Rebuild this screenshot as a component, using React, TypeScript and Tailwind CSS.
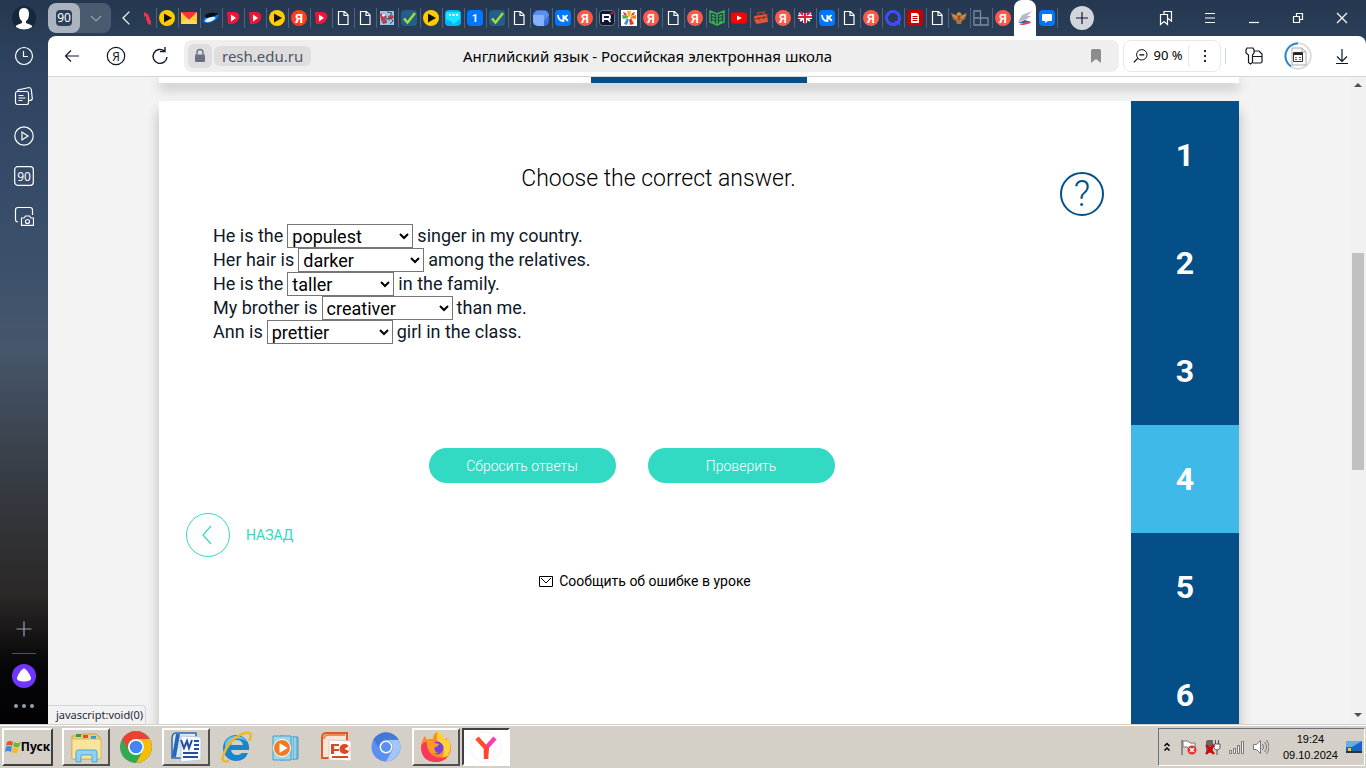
import { useState } from 'react';
import type { ReactNode } from 'react';
import { clsx } from 'clsx';

type TabKind =
  | 'cut' | 'play' | 'mail' | 'planet' | 'd' | 'ya' | 'yaSoft' | 'doc' | 'cartoon' | 'check'
  | 'chat' | 'one' | 'cube' | 'vk' | 'rutube' | 'flower' | 'book' | 'youtube' | 'case'
  | 'heart' | 'ring' | 'list' | 'eagle' | 'blocks';

const tabs: TabKind[] = [
  'play', 'mail', 'planet', 'd', 'd', 'play', 'ya', 'd', 'doc', 'doc',
  'cartoon', 'check', 'play', 'chat', 'one', 'check', 'doc', 'cube', 'vk', 'yaSoft',
  'rutube', 'flower', 'yaSoft', 'doc', 'yaSoft', 'book', 'youtube', 'case', 'yaSoft', 'heart',
  'vk', 'doc', 'yaSoft', 'ring', 'list', 'doc', 'eagle', 'blocks', 'yaSoft',
];

const shapes: Record<TabKind, ReactNode> = {
  cut: <path d="M8 2l4 2 3 8v3l-3-1-2-5v-3l-2 1z" fill="#f0304e" />,
  play: (
    <>
      <circle cx="8" cy="8" r="8" fill="#ffcc00" />
      <path d="M5 3.5v9L13 8z" fill="#111" />
    </>
  ),
  mail: (
    <>
      <path d="M0 2h16v12H0z" fill="#ffcc33" />
      <path d="M0 2h16l-8 8z" fill="#f8333c" />
      <path d="M0 14l6-6 2 2 2-2 6 6z" fill="#ffdb5c" />
    </>
  ),
  planet: (
    <>
      <path d="M0 11C1 5 8 2 16 4c0 4-5 8-11 9-4 0-5-1-5-2z" fill="#0870e8" />
      <path d="M2 6c3-4 9-4 14-2L9 7 3 8z" fill="#080b12" />
      <ellipse cx="7" cy="9.500" rx="5.500" ry="2.200" fill="#d8f2ff" transform="rotate(-20 7 9)" />
    </>
  ),
  d: (
    <>
      <path d="M2 2h6c5 0 7 2 6 6s-4 6-8 6H3z" fill="#ef1536" />
      <path d="M6 4.500l5 3.500-5 3.500z" fill="#fff" />
    </>
  ),
  ya: (
    <>
      <circle cx="8" cy="8" r="8" fill="#fc3f1d" />
      <text x="8" y="12.5" textAnchor="middle" fontSize="13" fontWeight="700" fill="#fff">Я</text>
    </>
  ),
  yaSoft: (
    <>
      <circle cx="8" cy="8" r="8" fill="#fa5b49" />
      <text x="8" y="12.5" textAnchor="middle" fontSize="13" fontWeight="600" fill="#fff">Я</text>
    </>
  ),
  doc: <path d="M3.500 1.500h6l3.500 3.500v9.500H3.500zM9 1.500V5.500h4" fill="none" stroke="#fff" strokeWidth="1.200" />,
  cartoon: (
    <>
      <path d="M1 1h14v14H1z" fill="#9bc9e4" />
      <path d="M1 4l4-1 2 3-1 4 2 3-4 1-2-4zM9 6l5-1 1 3-4 1-1 3z" fill="#c73b48" />
      <circle cx="4.500" cy="5" r="1.500" fill="#fff" />
      <path d="M8 2l5 1-2 3M8 9l4-1 2 3-3 3M7 6v7" stroke="#344767" fill="none" />
    </>
  ),
  check: (
    <>
      <rect width="16" height="16" rx="4" fill="#235f86" />
      <path d="M3 8.5l3.500 4L14 3" fill="none" stroke="#a5dc3c" strokeWidth="2.4" />
    </>
  ),
  chat: (
    <>
      <rect width="16" height="16" rx="4" fill="#00b7ff" />
      <path d="M1 2h14v7l-4 3-3 3-1-3-6-3z" fill="#18e8ff" />
      <path d="M4 5h2M7.500 5h2M11 5h2" stroke="#fff" strokeWidth="2" />
    </>
  ),
  one: (
    <>
      <rect width="16" height="16" rx="4" fill="#0077ff" />
      <text x="8" y="12" textAnchor="middle" fontSize="11" fontWeight="700" fill="#fff">1</text>
    </>
  ),
  cube: (
    <>
      <rect width="16" height="16" rx="5" fill="#3a6fd8" />
      <path d="M0 5h11v11H5a5 5 0 01-5-5z" fill="#85b2ff" />
      <path d="M0 5l4-4h9l3 4-5 6V5z" fill="#5a90f0" />
    </>
  ),
  vk: (
    <>
      <rect width="16" height="16" rx="4" fill="#0077ff" />
      <path d="M3 5c.2 4 2.200 6 5.400 6V5M8.400 8c2-.3 3-1.300 3.900-3M9 8c2 .3 3 1.500 3.800 3" fill="none" stroke="#fff" strokeWidth="1.8" />
    </>
  ),
  rutube: (
    <>
      <rect x=".5" y=".5" width="15" height="15" rx="3" fill="#0e1733" stroke="#68758a" />
      <path d="M4 12V5h5.500q1.500 0 1.500 2t-1.500 2H5M9 9l2.500 3" fill="none" stroke="#fff" strokeWidth="1.8" />
      <circle cx="12.800" cy="3.200" r="1.200" fill="#ed143b" />
    </>
  ),
  flower: (
    <>
      <path d="M0 0h16v16H0z" fill="#fff" />
      <path d="M6 1h4l-1 6H7z" fill="#ffb400" />
      <path d="M15 5v4l-6-1V7z" fill="#ff7a00" />
      <path d="M13 14l-4 1-1-6 2-1z" fill="#e2352b" />
      <path d="M3 14l3 1 2-6-2-1z" fill="#3e8ede" />
      <path d="M1 5l1 4 5-1V6z" fill="#54b435" />
      <path d="M2 2l3 1 1 3-3-1z" fill="#e23b60" />
      <path d="M14 2l-3 1-1 3 3-1z" fill="#f04030" />
      <circle cx="8" cy="8" r="1.500" fill="#fff" />
    </>
  ),
  book: (
    <path d="M8 4v11l-7-3V1l7 3 7-3v11l-7 3M3 5l3 1.500M3 8l3 1.500M10 6.500L13 5M10 9.500L13 8M3 11l3 1.500M13 11l-3 1.500" fill="none" stroke="#35b44a" strokeWidth="1.500" />
  ),
  youtube: (
    <>
      <rect y="2.500" width="16" height="11" rx="3" fill="#f00" />
      <path d="M6 5.500v5L11 8z" fill="#fff" />
    </>
  ),
  case: (
    <>
      <path d="M5 5V3l6-1v3" fill="none" stroke="#b83b22" strokeWidth="1.500" />
      <path d="M1 6l13-2 1 8-11 2-2-2z" fill="#de573a" />
      <path d="M2 9l12-2M6 7v3M11 6v3" stroke="#8b2b20" />
    </>
  ),
  heart: (
    <>
      <path d="M8 15L1 8C-1 3 4-1 8 3c4-4 9 0 7 5z" fill="#263d9e" />
      <path d="M2 3l11 8M14 3L3 11" stroke="#fff" strokeWidth="2" />
      <path d="M8 3v10M1 7h14" stroke="#fff" strokeWidth="4" />
      <path d="M8 3v11M1 7h14M3 2l3 3M13 2l-3 3" stroke="#e02031" strokeWidth="2" />
    </>
  ),
  ring: (
    <>
      <circle cx="8" cy="8" r="6.500" fill="none" stroke="#414cff" strokeWidth="3" />
      <path d="M9 11h6v5z" fill="#414cff" />
    </>
  ),
  list: (
    <>
      <rect width="16" height="16" rx="3" fill="#c80000" />
      <path d="M4 3h6l2 2v8H4z" fill="#fff" />
      <path d="M5.500 6.500h5M5.500 8.500h5M5.500 10.500h5" stroke="#c80000" />
    </>
  ),
  eagle: (
    <>
      <path d="M0 3l5 2 2-3h2l2 3 5-2-2 6-3 2-1 3H6l-1-3-3-2z" fill="#a8743c" />
      <path d="M2 5l4 3M14 5l-4 3M6 4h4" stroke="#e8b468" />
      <path d="M7 6h2v4H7z" fill="#c63232" />
    </>
  ),
  blocks: (
    <path d="M1 1h6.500v7H1zM1 8h6.500v7H1zM7.500 8H15v7H7.500z" fill="none" stroke="#7d8b9f" strokeWidth="1.300" />
  ),
};

function Favicon({ kind }: { kind: TabKind }) {
  return (
    <svg viewBox="0 0 16 16" className="size-4 shrink-0 font-['Roboto',sans-serif]" aria-hidden="true">
      {shapes[kind]}
    </svg>
  );
}

function Stroke({ children, className = 'size-5' }: { children: ReactNode; className?: string }) {
  return (
    <svg viewBox="0 0 20 20" fill="none" stroke="currentColor" strokeWidth="1.2" className={className} aria-hidden="true">
      {children}
    </svg>
  );
}

function Sidebar() {
  const icons = [
    { label: 'History', icon: <><circle cx="10" cy="10" r="8.500" /><path d="M9.500 5v5.500H14" /></> },
    { label: 'Collections', icon: <><rect x="1.500" y="5.500" width="13" height="13" rx="2" /><path d="M4 5V4l11-2.500q2 0 2.300 2l1 9q0 2-3.300 2M4.500 9.500h5M4.500 12h7M4.500 14.500h4" /></> },
    { label: 'Video', icon: <><circle cx="10" cy="10" r="9.200" /><path d="M8 6v8l6-4z" /></> },
    { label: 'Tabs', icon: <><rect x=".7" y=".7" width="18.600" height="18.600" rx="3" /><text x="10" y="14.500" textAnchor="middle" fontSize="12" fill="currentColor" stroke="none">90</text></> },
    { label: 'Screenshot', icon: <><path d="M4 16q-2.500 0-2.500-2.500V4Q1.500 1.500 4 1.500h12q2.500 0 2.500 2.500v5" /><path d="M8 12h2l1.500-2h4l1.500 2h2.500v7.300H7.500V12z" /><circle cx="13.500" cy="15.500" r="2" /></> },
  ];

  return (
    <aside className="flex w-12 shrink-0 flex-col items-center text-white">
      <button aria-label="Profile" className="flex h-9 items-center">
        <svg viewBox="0 0 24 24" className="size-6">
          <circle cx="12" cy="12" r="12" fill="#17283a" />
          <path d="M12 2c4 0 5 3 5 6s-1 6-3 7v2l5 2c1 .500 1 1 1 2q-8 5-16 0c0-1 0-1.500 1-2l5-2v-2c-2-1-3-4-3-7s1-6 5-6z" fill="#fff" />
        </svg>
      </button>
      {icons.map((item) => (
        <button key={item.label} aria-label={item.label} className="flex h-10 items-center">
          <Stroke>{item.icon}</Stroke>
        </button>
      ))}
      <div className="mt-auto flex flex-col items-center pb-3.5">
        <button aria-label="Add" className="text-gray-400">
          <Stroke><path d="M10 2.500v15M2.500 10h15" /></Stroke>
        </button>
        <div className="mt-3.5 mb-2.5 h-px w-6 bg-gray-600" />
        <button aria-label="Alice">
          <svg viewBox="0 0 24 24" className="size-6">
            <circle cx="12" cy="12" r="12" fill="#7036ff" />
            <path d="M12 4.500c2 0 7 7 7 10 0 2-3 3-7 3s-7-1-7-3c0-3 5-10 7-10z" fill="#fff" />
          </svg>
        </button>
        <button aria-label="More" className="mt-4 flex gap-1 pb-0.5">
          <span className="size-1 rounded-full bg-gray-400" />
          <span className="size-1 rounded-full bg-gray-400" />
          <span className="size-1 rounded-full bg-gray-400" />
        </button>
      </div>
    </aside>
  );
}

function TabStrip() {
  const controls = [
    { label: 'Bookmarks', icon: <path d="M4.500 6.500h7v10L8 13.500l-3.500 3zM8 6V3.500h7.500v9.500L12 10.500" /> },
    { label: 'Menu', icon: <path d="M5 5.500h10M5 10h10M5 14.500h10" /> },
    { label: 'Minimize', icon: <path d="M5 14.500h10" /> },
    { label: 'Restore', icon: <path d="M5.500 8.500h6v6h-6zM8.500 8V5.500h6v6H12" /> },
    { label: 'Close', icon: <path d="M5 5l10 10M15 5L5 15" /> },
  ];

  return (
    <div className="flex h-9 items-center text-white">
      <div className="flex h-[30px] w-[63px] shrink-0 overflow-hidden rounded-lg bg-[#4a5b70]">
        <button className="flex w-8 items-center justify-center rounded-lg bg-[#abb3be]">
          <span className="flex size-4 items-center justify-center rounded-sm bg-[#2b405a] text-xs">90</span>
        </button>
        <button aria-label="Tab groups" className="flex flex-1 items-center justify-center text-gray-400">
          <Stroke><path d="M5 8l5 5 5-5" /></Stroke>
        </button>
      </div>
      <button aria-label="Scroll tabs" className="flex w-6 shrink-0 justify-end">
        <Stroke className="size-4"><path d="M13 2L5 10l8 8" strokeWidth="1.500" /></Stroke>
      </button>
      <div className="flex h-9 items-center">
        <div className="flex w-[21px] justify-center pr-1"><Favicon kind="cut" /></div>
        {tabs.map((kind, index) => (
          <button key={index} aria-label={`Tab ${index + 1}`} className="flex h-5 w-[22px] items-center justify-center border-l border-[#53627a] pr-px">
            <Favicon kind={kind} />
          </button>
        ))}
        <button aria-label="Active tab" className="flex h-9 w-[22px] items-center justify-center rounded-t-lg bg-white">
          <svg viewBox="0 0 16 16" className="size-4">
            <path d="M1 13l7-3 6 2-4 2z" fill="#2b65ba" />
            <path d="M2 15l10-4 2 2-7 2z" fill="#ed4452" />
            <path d="M1 12l4-7 10-4-5 5h4l-4 3-3 1z" fill="#b6bac1" />
          </svg>
        </button>
        <button aria-label="Messages" className="flex h-5 w-[22px] items-center justify-center border-r border-[#53627a]">
          <svg viewBox="0 0 16 16" className="size-4">
            <rect width="16" height="16" rx="4" fill="#0077ff" />
            <path d="M4 4h8q1 0 1 1v5q0 1-1 1H9l-3 2v-2H4q-1 0-1-1V5q0-1 1-1z" fill="#fff" />
          </svg>
        </button>
      </div>
      <button aria-label="New tab" className="ml-3 flex size-6 shrink-0 items-center justify-center rounded-full bg-[#d2d5dc] text-gray-900">
        <Stroke><path d="M10 4v12M4 10h12" /></Stroke>
      </button>
      <div className="ml-auto flex pr-0.5">
        {controls.map((item) => (
          <button key={item.label} aria-label={item.label} className="flex w-11 justify-center">
            <Stroke>{item.icon}</Stroke>
          </button>
        ))}
      </div>
    </div>
  );
}

function Toolbar() {
  return (
    <div className="flex h-[41px] shrink-0 items-center rounded-t-lg border-b border-gray-300 bg-white px-0.5 text-gray-900">
      <button aria-label="Back" className="flex w-11 justify-center">
        <Stroke><path d="M17 10H3.500M9 4.500L3.500 10 9 15.500" /></Stroke>
      </button>
      <button aria-label="Yandex" className="flex w-11 justify-center">
        <Stroke>
          <circle cx="10" cy="10" r="8.700" />
          <text x="10" y="14.500" textAnchor="middle" fontSize="12" fill="currentColor" stroke="none">Я</text>
        </Stroke>
      </button>
      <button aria-label="Reload" className="flex w-11 justify-center">
        <Stroke><path d="M14.500 5A7 7 0 1017 11M15 1v4.500h-5" strokeWidth="1.400" /></Stroke>
      </button>
      <div className="ml-0.5 grid h-8 flex-1 grid-cols-[1fr_auto_1fr] items-center rounded-lg bg-[#efefef] pr-3 pl-1">
        <div className="flex gap-0.5">
          <button aria-label="Site protection" className="flex size-6 items-center justify-center rounded-md bg-[#dedede] text-gray-500">
            <svg viewBox="0 0 16 16" className="size-4" fill="none" stroke="currentColor">
              <path d="M5 7V4.500a3 3 0 016 0V7" strokeWidth="1.400" />
              <rect x="3" y="6.500" width="10" height="7.500" rx="1" fill="currentColor" stroke="none" />
            </svg>
          </button>
          <button className="flex h-5 items-center self-center rounded-md bg-[#dedede] px-2 text-[15px] text-gray-600">resh.edu.ru</button>
        </div>
        <div className="text-[15px] text-black">Английский язык - Российская электронная школа</div>
        <button aria-label="Bookmark" className="justify-self-end px-1">
          <svg viewBox="0 0 14 16" className="h-4 w-3.5" fill="#8b8b8b"><path d="M2 3q0-2 2-2h6q2 0 2 2v12l-5-4-5 4z" /></svg>
        </button>
      </div>
      <div className="ml-1 flex h-8 w-[98px] items-center rounded-lg border border-gray-200">
        <button className="flex flex-1 items-center justify-center gap-1 pl-1 text-[13px] text-black">
          <Stroke className="size-4"><circle cx="11" cy="8.500" r="6.500" /><path d="M6 13l-5 5M8 8.500h6" strokeWidth="1.500" /></Stroke>
          90 %
        </button>
        <button aria-label="Options" className="flex h-5 w-8 items-center justify-center border-l border-gray-200">
          <svg viewBox="0 0 4 14" className="h-3.5 w-1" fill="#222"><path d="M1 1h2v2H1zM1 6h2v2H1zM1 11h2v2H1z" /></svg>
        </button>
      </div>
      <div className="ml-1 h-4 w-px bg-gray-300" />
      <div className="ml-1.5 flex items-center">
        <button aria-label="Passwords" className="flex w-11 justify-center">
          <Stroke><path d="M3 2h6l1 2v3L8.500 9v7.500L6.500 18l-2-1.500V9L2 7V4zM10 5h5l3 3v7.500q0 1.500-1.500 1.500H9M9 10.500h9" /></Stroke>
        </button>
        <button aria-label="Extension" className="flex w-11 items-center justify-center">
          <svg viewBox="0 0 28 28" className="size-7" fill="none">
            <circle cx="14" cy="14" r="12.800" stroke="#dedede" strokeWidth="2" />
            <path d="M7 24.500A12.800 12.800 0 0114 1.200" stroke="#2588d8" strokeWidth="2" />
            <path d="M8 6h10l4 4v13H8zM18 6v4h4" stroke="#aaa" />
            <path d="M9.500 10.500h9v9h-9z" stroke="#333" fill="#fff" />
            <path d="M9.500 11h9v2h-9z" fill="#222" />
            <path d="M11 15h2v1h-2zM15 17h2v1h-2z" fill="#d44" />
            <path d="M15 15h2v1h-2zM11 17h2v1h-2z" fill="#35d" />
          </svg>
        </button>
        <button aria-label="Downloads" className="flex w-11 justify-center">
          <Stroke><path d="M10 3v12M5 10.500l5 5 5-5M4 17.500h12" /></Stroke>
        </button>
      </div>
    </div>
  );
}

const questions = [
  { before: 'He is the', options: ['populest', 'popular', 'most popular'], after: 'singer in my country.', width: 'w-[126px]' },
  { before: 'Her hair is', options: ['darker', 'dark', 'the darkest'], after: 'among the relatives.', width: 'w-[126px]' },
  { before: 'He is the', options: ['taller', 'tall', 'tallest'], after: 'in the family.', width: 'w-[107px]' },
  { before: 'My brother is', options: ['creativer', 'creative', 'more creative'], after: 'than me.', width: 'w-[131px]' },
  { before: 'Ann is', options: ['prettier', 'pretty', 'the prettiest'], after: 'girl in the class.', width: 'w-[126px]' },
];

function Lesson() {
  const [answers, setAnswers] = useState(questions.map((q) => q.options[0]));

  return (
    <main className="flex min-w-0 flex-1 flex-col pr-[27px] pl-[54px]">
      <div className="grid pt-[60px]">
        <h1 className="col-start-1 row-start-1 text-center text-[23px] leading-9 font-light text-black">Choose the correct answer.</h1>
        <button aria-label="Help" className="col-start-1 row-start-1 mt-[11px] flex size-11 items-center justify-center justify-self-end rounded-full border-2 border-[#044f87] text-[#044f87]">
          <span className="text-4xl font-light">?</span>
        </button>
      </div>

      <div className="mt-2 text-lg leading-6 text-gray-900">
        {questions.map((q, index) => (
          <div key={index} className="flex h-6 items-center gap-1">
            <label htmlFor={`answer-${index}`}>{q.before}</label>
            <select
              id={`answer-${index}`}
              value={answers[index]}
              onChange={(e) => setAnswers((prev) => prev.map((a, i) => (i === index ? e.target.value : a)))}
              className={clsx('h-6 border border-[#767676] bg-white leading-[22px] text-black', q.width)}
            >
              {q.options.map((option) => (
                <option key={option}>{option}</option>
              ))}
            </select>
            <span>{q.after}</span>
          </div>
        ))}
      </div>

      {/* Actions */}
      <div className="-ml-[54px] mt-[104px] flex justify-center gap-8 text-sm font-light text-white">
        <button className="h-[35px] w-[187px] rounded-full bg-[#32d9c3]">Сбросить ответы</button>
        <button className="h-[35px] w-[187px] rounded-full bg-[#32d9c3]">Проверить</button>
      </div>
      <a href="#back" className="-ml-[27px] mt-[30px] flex items-center gap-4 self-start text-sm text-[#32d9c3]">
        <span className="flex size-11 items-center justify-center rounded-full border border-[#32d9c3]">
          <Stroke><path d="M13 1L5 10l8 9" /></Stroke>
        </span>
        НАЗАД
      </a>
      <a href="#report" className="-ml-[54px] -mr-[27px] mt-3.5 flex items-center justify-center gap-1.5 text-sm text-black">
        <svg viewBox="0 0 14 11" className="h-[11px] w-3.5" fill="none" stroke="currentColor"><path d="M.5.5h13v10H.5zM2 2l5 5 5-5" /></svg>
        Сообщить об ошибке в уроке
      </a>
    </main>
  );
}

function Page() {
  return (
    <div className="relative flex min-h-0 flex-1 bg-[#f3f3f3] font-['Roboto',sans-serif]">
      <div className="flex min-w-0 flex-1 flex-col overflow-hidden">
        <div className="mx-auto grid h-1.5 w-full max-w-[1080px] shrink-0 grid-cols-5 bg-white shadow-[0_5px_12px_rgba(0,0,0,0.28)]">
          <div className="col-start-3 bg-[#044f87]" />
        </div>
        <div className="mx-auto mt-[18px] flex w-full max-w-[1080px] flex-1 bg-white shadow-[0_10px_12px_rgba(0,0,0,0.25)]">
          <Lesson />
          <nav className="flex w-[108px] shrink-0 flex-col bg-[#044f87] text-[32px] font-bold text-white">
            {[1, 2, 3, 4, 5, 6].map((n) => (
              <a
                key={n}
                href={`#task-${n}`}
                className={clsx('flex h-[108px] shrink-0 items-center justify-center', n === 4 && 'bg-[#3fb9e8]')}
              >
                {n}
              </a>
            ))}
          </nav>
        </div>
      </div>

      {/* Scrollbar */}
      <div className="flex w-4 shrink-0 flex-col items-center bg-[#f1f1f1]">
        <svg viewBox="0 0 16 17" className="h-[17px] w-4" fill="#505050"><path d="M4 10l4-4 4 4z" /></svg>
        <div className="flex-[159]" />
        <div className="w-3 flex-[217] bg-[#c1c1c1]" />
        <div className="flex-[237]" />
        <svg viewBox="0 0 16 17" className="h-[17px] w-4" fill="#505050"><path d="M4 6l4 4 4-4z" /></svg>
      </div>

      <div className="absolute bottom-0 left-0 rounded-tr border-t border-r border-gray-300 bg-[#f2f2f2] px-2 pr-0.5 font-['Noto_Sans',sans-serif] text-[11px] leading-[18px] text-gray-800">
        javascript:void(0)
      </div>
    </div>
  );
}

const apps = [
  {
    label: 'Explorer',
    state: 'open',
    icon: (
      <>
        <path d="M2 5h8l2-2h14l4 3v22H2z" fill="#e9cf78" stroke="#c6a64c" />
        <path d="M6 3h5v3H6z" fill="#2ca43a" /><path d="M13 4h5v3h-5z" fill="#d95332" /><path d="M21 5h5v3h-5z" fill="#2999e8" />
        <path d="M2 8h29v20H2z" fill="#f8e49c" stroke="#d8b95c" />
        <path d="M6 31V21q0-2 2-2h17q2 0 2 2v10h-5v-7H11v7z" fill="#8fd3f3" stroke="#53a5d5" />
      </>
    ),
  },
  {
    label: 'Chrome',
    icon: (
      <>
        <circle cx="16" cy="16" r="16" fill="#34a853" />
        <path d="M2.200 8A16 16 0 0129.800 8H16a8 8 0 00-7 12z" fill="#ea4335" />
        <path d="M29.800 8A16 16 0 0116 32l7-12a8 8 0 00-7-12z" fill="#fbbc05" />
        <circle cx="16" cy="16" r="8" fill="#fff" /><circle cx="16" cy="16" r="6.300" fill="#4285f4" />
      </>
    ),
  },
  {
    label: 'Word',
    state: 'open',
    icon: (
      <>
        <path d="M6 2h20v25H2V8q0-6 4-6z" fill="#dce9f8" stroke="#2f66ae" strokeWidth="1.500" />
        <path d="M8 3L4 26" stroke="#2867b8" strokeWidth="4" />
        <path d="M11 5l20 1v23l-20 2z" fill="#f8fbff" stroke="#bcc8dc" />
        <path d="M11 9l3 8 3-7 2 7 3-8" fill="none" stroke="#254e9b" strokeWidth="2" />
        <path d="M24 10h5M24 14h5M24 18h5M13 22h15M13 26h15" stroke="#254e9b" strokeWidth="2" />
      </>
    ),
  },
  {
    label: 'Internet Explorer',
    icon: (
      <>
        <path d="M16 4a13 13 0 0113 15H11q1 5 6 5 3 0 5-2h6Q25 30 16 30A13 13 0 0116 4z" fill="#1685cf" />
        <path d="M11 14q1-5 6-5t6 5z" fill="#d4d0c8" />
        <path d="M5 12q3-7 11-7 7 0 11 6-5-4-11-3-7 1-11 9z" fill="#6ec4ee" />
        <path d="M9 30q-8 2-6-5Q8 9 22 3q8-3 9 1 0 3-2 6" fill="none" stroke="#efb827" strokeWidth="2.500" />
      </>
    ),
  },
  {
    label: 'Media Player',
    icon: (
      <>
        <path d="M10 5l18 1v22l-18 1z" fill="#72b9da" stroke="#4c98bc" /><path d="M22 5v24M25 6v22" stroke="#bce6f5" />
        <path d="M3 5h18v24H3z" fill="#9ed6ec" stroke="#4b9dc4" />
        <circle cx="12" cy="17" r="8.500" fill="#f27b20" stroke="#fff" /><path d="M9.500 12v10l8-5z" fill="#fff" />
      </>
    ),
  },
  {
    label: 'PowerPoint',
    icon: (
      <>
        <path d="M6 2h21v25H2V7q0-5 4-5z" fill="#fbe4d6" stroke="#d95a2c" strokeWidth="2" />
        <path d="M4 8q0-4 4-4h17" fill="none" stroke="#ee8659" strokeWidth="2" />
        <path d="M9 9l22 1v20l-22-1z" fill="#fff" stroke="#ddc9c0" />
        <path d="M11 13h8v2h-5v3h5v2h-5v3h-3z" fill="#d94a20" /><circle cx="24.500" cy="18" r="5" fill="#d94a20" />
        <path d="M24.500 18l4.500-3v5z" fill="#fff" /><path d="M12 26h16" stroke="#d94a20" strokeWidth="2" />
      </>
    ),
  },
  {
    label: 'Chromium',
    icon: (
      <>
        <circle cx="16" cy="16" r="14.500" fill="#5b8ff0" />
        <path d="M3.500 8.500A14.500 14.500 0 0128.500 8.500H16a7 7 0 00-6 10z" fill="#4378d8" />
        <path d="M28.500 9A14.500 14.500 0 0116 30.500l6-11a7 7 0 00-6-10.500z" fill="#a4c5fa" />
        <circle cx="16" cy="16" r="6.500" fill="#fff" /><circle cx="16" cy="16" r="5" fill="#5b91ee" />
      </>
    ),
  },
  {
    label: 'Firefox',
    state: 'open',
    icon: (
      <>
        <path d="M17 1q6 4 7 8l3-2q4 5 4 10a15 14 0 01-30 0Q1 10 5 5l2 4q3-2 6-1 0-5 4-7z" fill="#ff8a26" />
        <path d="M18 0q6 4 7 9l3-1q4 7 1 14-2 6-9 8 6-8 3-14l-6-7q-1-5 1-9z" fill="#ffd335" />
        <path d="M1 15q0 16 15 16 8 0 12-6-9 4-16-1-6-5-3-12-5-3-8 3z" fill="#f8385f" />
        <circle cx="17" cy="17" r="6.500" fill="#7542e5" />
        <path d="M7 10q6-2 8 2l4 1q-1 3-4 3-2 4 3 6-6 2-9-3-3-4-2-9z" fill="#ff9b22" />
      </>
    ),
  },
  {
    label: 'Yandex Browser',
    state: 'active',
    icon: (
      <>
        <circle cx="16" cy="16" r="15.500" fill="#fff" stroke="#f3f3f3" />
        <path d="M7 7l9 10v11" fill="none" stroke="#ff4c25" strokeWidth="4.500" />
        <path d="M25 7l-9 10" stroke="#ff3bb4" strokeWidth="4.500" />
        <path d="M14 17l3-3 2 3-1 11h-4z" fill="#ff4632" />
      </>
    ),
  },
];

function Taskbar() {
  return (
    <footer className="flex h-11 shrink-0 border-t border-[#d4d0c8] bg-[#d4d0c8] font-['Noto_Sans',sans-serif] text-black">
      <div className="flex flex-1 items-center border-t border-white pt-0.5 pr-px pb-0.5 pl-0.5">
        <button className="mr-[9px] flex h-[38px] w-[51px] items-center justify-center border-2 border-t-white border-r-[#404040] border-b-[#404040] border-l-white text-xs font-bold">
          <svg viewBox="0 0 16 16" className="size-4 shrink-0">
            <path d="M2 3q3-2 6 0L7 7Q4 5 1 7z" fill="#e5532c" /><path d="M9 3q3 2 7 0l-2 5q-3 1-6-1z" fill="#6fb63d" />
            <path d="M1 8q3-2 6 0l-1 5q-3-2-6 0z" fill="#3b8cdb" /><path d="M8 8q3 2 6 1l-2 5q-3 1-5-1z" fill="#f5bb25" />
          </svg>
          Пуск
        </button>
        <div className="flex gap-0.5">
          {apps.map((app) => (
            <button
              key={app.label}
              aria-label={app.label}
              className={clsx(
                'flex h-[38px] w-12 items-center justify-center border-2',
                !app.state && 'border-transparent',
                app.state === 'open' && 'border-t-white border-r-[#505050] border-b-[#505050] border-l-white',
                app.state === 'active' && 'border-t-[#404040] border-r-white border-b-white border-l-[#404040] bg-white'
              )}
            >
              <svg viewBox="0 0 32 32" className="size-8">{app.icon}</svg>
            </button>
          ))}
        </div>

        {/* Tray */}
        <div className="ml-auto flex h-[38px] items-center border border-t-gray-500 border-r-white border-b-white border-l-gray-500 pl-1">
          <button aria-label="Show hidden icons" className="mr-2.5">
            <svg viewBox="0 0 8 10" className="h-2.5 w-2" fill="none" stroke="#000" strokeWidth="1.500"><path d="M1.500 4L4 1.500 6.500 4M1.500 8.500L4 6l2.500 2.500" /></svg>
          </button>
          <div className="flex items-center gap-2">
            <svg viewBox="0 0 16 16" className="size-4">
              <path d="M1 1v15" stroke="#777" strokeWidth="1.500" /><path d="M2 2h5l2 2h5v6H8L6 8H2z" fill="#fff" stroke="#777" />
              <circle cx="11" cy="11" r="4.500" fill="#e1332a" /><path d="M9 9l4 4M13 9l-4 4" stroke="#fff" strokeWidth="1.500" />
            </svg>
            <svg viewBox="0 0 16 16" className="size-4">
              <path d="M1 3q0-2 2-2h5v13H1z" fill="#666" /><path d="M9 5h6v4q-1 2-3 2t-3-2zM10.500 1v4M13.500 1v4M12 11v5" fill="#fff" stroke="#555" />
              <path d="M1 6l8 9M9 6l-8 9" stroke="#e10000" strokeWidth="2.500" />
            </svg>
            <svg viewBox="0 0 16 16" className="size-4" fill="#f4f4f4" stroke="#777">
              <path d="M.5 11.500h2v3h-2zM4.500 9.500h2v5h-2zM8.500 6.500h2v8h-2zM12.500 2.500h2v12h-2z" />
            </svg>
            <svg viewBox="0 0 16 16" className="size-4" fill="none" stroke="#777">
              <path d="M.5 5.500h3l4-4v13l-4-4h-3z" fill="#fff" /><path d="M9.500 5q2 3 0 6M11.500 3q4 5 0 10M13.500 1q5 7 0 14" />
            </svg>
          </div>
          <div className="ml-3.5 text-center font-['Liberation_Sans',sans-serif] text-[11px] leading-4">
            <div>19:24</div>
            <div>09.10.2024</div>
          </div>
          <button aria-label="Show desktop" className="ml-2 pr-0.5">
            <svg viewBox="0 0 16 14" className="h-3.5 w-4"><path d="M0 1h16v10H0z" fill="#1966c2" /><path d="M0 1h16L6 7H0z" fill="#65aceb" /><path d="M0 11h16v2H0z" fill="#234" /><path d="M2 8h3v3H2z" fill="#ffc52c" /></svg>
          </button>
        </div>
      </div>
    </footer>
  );
}

export default function App() {
  return (
    <div className="flex h-screen flex-col overflow-hidden font-['Noto_Sans',sans-serif]">
      <div className="flex min-h-0 flex-1 bg-[linear-gradient(to_bottom,#263850,#2e4461_10%,#384e69_32%,#46566c_48%,#35393f_68%,#2b2827_82%,#060608_92%,#020204)]">
        <Sidebar />
        <div className="flex min-w-0 flex-1 flex-col">
          <TabStrip />
          <Toolbar />
          <Page />
        </div>
      </div>
      <Taskbar />
    </div>
  );
}
